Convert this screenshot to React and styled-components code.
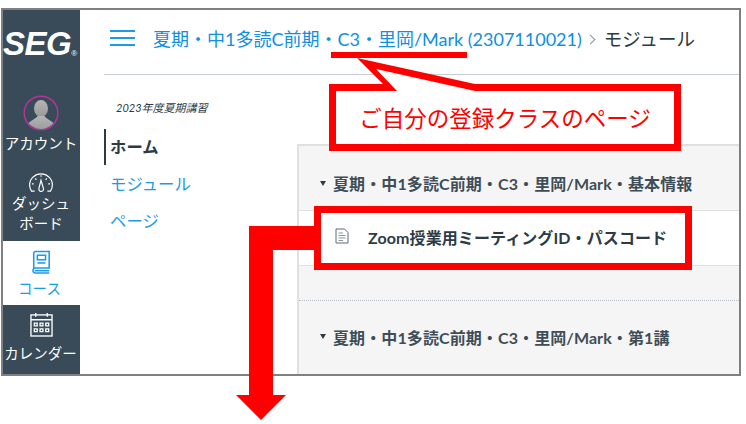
import styled, { createGlobalStyle } from "styled-components";

const GlobalStyle = createGlobalStyle`
    html, body {
        margin: 0;
        padding: 0;
        background: #fff;
        font-family: Lato, "Noto Sans CJK JP", sans-serif;
    }
`

const Page = styled.div`
    position: relative;
    width: 746px;
    height: 424px;
    overflow: hidden;
    padding: 8px 0 0 1px;
    box-sizing: border-box;
`

const Frame = styled.div`
    display: flex;
    width: 740px;
    height: 368px;
    box-sizing: border-box;
    border: 2px solid #808080;
    overflow: hidden;
    background: #fff;
`

const Sidebar = styled.nav`
    flex: 0 0 77px;
    display: flex;
    flex-direction: column;
    align-items: stretch;
    background: #394b58;
    color: #fff;
`

const Logo = styled.div`
    flex: none;
    height: 82px;
    padding-top: 18px;
    box-sizing: border-box;
    font: italic 700 33px/32px "Liberation Sans", sans-serif;
    letter-spacing: -0.5px;
    white-space: nowrap;

    sup {
        font-size: 8px;
        font-style: normal;
        font-weight: 400;
        letter-spacing: 0;
        vertical-align: -1px;
        line-height: 0;
    }
`

const NavItem = styled.a`
    flex: none;
    display: flex;
    flex-direction: column;
    align-items: center;
    height: ${(p) => p.$height}px;
    padding-top: ${(p) => p.$top}px;
    padding-right: 1px;
    box-sizing: border-box;
    font-size: 14.5px;
    line-height: 20px;
    text-align: center;
    white-space: nowrap;
    background: ${(p) => (p.$active ? "#fff" : "transparent")};
    color: ${(p) => (p.$active ? "#1e9be8" : "#fff")};
`

const NavLabel = styled.span`
    margin-top: ${(p) => p.$gap || 0}px;
    margin-right: ${(p) => p.$shift || 0}px;
`

const Main = styled.div`
    flex: 1;
    display: flex;
    flex-direction: column;
    min-width: 0;
`

const Header = styled.header`
    display: flex;
    align-items: center;
    height: 64px;
    margin-left: 24px;
    padding-left: 6px;
    border-bottom: 1px solid #c7cdd1;
    white-space: nowrap;
    flex: none;
`

const Burger = styled.div`
    width: 25px;
    height: 16px;
    margin-top: -8px;
    margin-right: 18px;
    border-top: 2px solid #1e9be8;
    border-bottom: 2px solid #1e9be8;
    box-sizing: border-box;
    position: relative;

    &::after {
        content: "";
        position: absolute;
        left: 0;
        right: 0;
        top: 5px;
        height: 2px;
        background: #1e9be8;
    }
`

const Crumbs = styled.div`
    display: flex;
    align-items: center;
    margin-top: -8px;
    font-size: 18px;
`

const CrumbLink = styled.a`
    color: #0e8fdf;
`

const CrumbCurrent = styled.span`
    color: #2d3b45;
    font-size: 18.5px;
`

const Chevron = styled.span`
    display: inline-block;
    width: 6px;
    height: 6px;
    margin: 2px 10px 0 5px;
    border-top: 1px solid #8a959c;
    border-right: 1px solid #8a959c;
    transform: rotate(45deg);
`

const Body = styled.div`
    flex: 1;
    display: flex;
    min-height: 0;
`

const CourseNav = styled.aside`
    flex: 0 0 217px;
    padding: 25px 0 0 24px;
    box-sizing: border-box;
`

const Term = styled.div`
    font-size: 11px;
    font-style: italic;
    line-height: 16px;
    color: #2d3b45;
    padding-left: 12px;
    margin-bottom: 13px;
`

const CourseLink = styled.a`
    display: block;
    height: 36px;
    line-height: 36px;
    padding-left: 4px;
    border-left: 2px solid ${(p) => (p.$active ? "#2d3b45" : "transparent")};
    font-size: 16.4px;
    font-weight: ${(p) => (p.$active ? 700 : 400)};
    color: ${(p) => (p.$active ? "#2d3b45" : "#1e9be8")};
    margin-bottom: 1px;
`

const Modules = styled.section`
    flex: 1;
    margin-top: 69px;
    background: #f5f5f5;
    border-top: 2px solid #dde1e4;
    border-left: 2px solid #dde1e4;
`

const ModuleHeader = styled.div`
    display: flex;
    align-items: center;
    height: ${(p) => p.$height}px;
    padding: ${(p) => p.$top || 0}px 0 0 21px;
    box-sizing: border-box;
    font-size: 16px;
    letter-spacing: 0.1px;
    font-weight: 700;
    color: #3f4d57;
    white-space: nowrap;
`

const Caret = styled.span`
    width: 0;
    height: 0;
    margin-right: 7px;
    border-left: 3.5px solid transparent;
    border-right: 3.5px solid transparent;
    border-top: 5px solid #2d3b45;
`

const ModuleItem = styled.div`
    display: flex;
    align-items: center;
    height: 56px;
    padding: 0 0 2px 36px;
    box-sizing: border-box;
    background: #fff;
    border-top: 1px solid #dde1e4;
    border-bottom: 1px solid #dde1e4;
    font-size: 16px;
    letter-spacing: 0.1px;
    font-weight: 700;
    color: #2d3b45;
    white-space: nowrap;

    svg {
        margin: -3px 19px 0 0;
    }
`

const ModuleGap = styled.div`
    height: 34px;
    border-bottom: 1px dotted #b8bec2;
`

const Overlay = styled.svg`
    position: absolute;
    left: 0;
    top: 0;
    pointer-events: none;
`

const CalloutText = styled.div`
    position: absolute;
    left: 336px;
    top: 102px;
    width: 338px;
    text-align: center;
    font-size: 22.5px;
    line-height: 34px;
    color: #f00;
    white-space: nowrap;
`

const DashIcon = () => (
    <svg width="26" height="20" viewBox="0 0 28 22" fill="none" stroke="#fff" strokeWidth="1.3">
        <path d="M7 20H3.500C2 18 1.500 16 1.500 13A12.500 12 0 0 1 26.500 13C26.500 16 26 18 24.500 20H21" />
        <path d="M14 8L16.500 16.500A2.600 2.600 0 1 1 11.700 17Z" />
        <path d="M4 12H6M22 12H24M7.500 6L9 7.500M20.500 6L19 7.500M14 2.500V4" />
    </svg>
);

const BookIcon = () => (
    <svg width="20" height="25" viewBox="0 0 22 26" fill="none" stroke="#1e9be8" strokeWidth="1.7">
        <path d="M3 20V3A2 2 0 0 1 5 1H20V19H4.500A2.800 2.800 0 0 0 4.500 24.500H20" />
        <path d="M4 22H20" />
        <rect x="7" y="5" width="9" height="5" />
        <path d="M7 13.500H16" />
    </svg>
);

const CalendarIcon = () => (
    <svg width="23" height="25" viewBox="0 0 24 26" fill="none" stroke="#fff" strokeWidth="1.4">
        <rect x="1" y="3" width="22" height="22" />
        <path d="M1 8H23M6 1V5M18 1V5" />
        <path d="M4.500 11.500h3v3h-3zM10.500 11.500h3v3h-3zM16.500 11.500h3v3h-3zM4.500 17.500h3v3h-3zM10.500 17.500h3v3h-3zM16.500 17.500h3v3h-3z" />
    </svg>
);

const PageIcon = () => (
    <svg width="14" height="16" viewBox="0 0 14 16" fill="none" stroke="#5c6a73" strokeWidth="1">
        <path d="M1 1H9.500L13 4.500V15H1Z" fill="#fff" />
        <path d="M3.500 5H8M3.500 7.500H10.500M3.500 10H10.500M3.500 12.500H8" stroke="#8a959c" />
    </svg>
);

const Avatar = () => (
    <svg width="36" height="36" viewBox="0 0 36 36">
        <defs>
            <clipPath id="avatarClip">
                <circle cx="18" cy="18" r="16" />
            </clipPath>
            <linearGradient id="avatarBody" x1="0" y1="0" x2="0" y2="1">
                <stop offset="0" stopColor="#b5b5b5" />
                <stop offset="1" stopColor="#999" />
            </linearGradient>
        </defs>
        <circle cx="18" cy="18" r="16.800" fill="#394b58" stroke="#b0349a" strokeWidth="1.500" />
        <g clipPath="url(#avatarClip)" fill="url(#avatarBody)">
            <ellipse cx="18" cy="13.500" rx="7" ry="8.500" />
            <path d="M3 33C4 26 12 25 14.500 21H21.500C24 25 32 26 33 33V36H3Z" />
        </g>
    </svg>
);

const Annotations = () => (
    <Overlay width="746" height="424" viewBox="0 0 746 424">
        <rect x="331" y="52" width="136" height="6" fill="#f00" />
        <rect x="332.500" y="87.500" width="345" height="60" fill="#fff" stroke="#f00" strokeWidth="7" />
        <polygon points="357,58 475,84 475,91 397,91 383,84" fill="#f00" />
        <polygon points="376,69 475,91 397,91" fill="#fff" />
        <rect x="317.500" y="209.500" width="371" height="57" fill="none" stroke="#f00" strokeWidth="7" />
        <path d="M314 226H249V395H236L261 420L286 395H273V250H314Z" fill="#f00" />
    </Overlay>
);

const App = () => {
    return (
        <Page>
            <GlobalStyle />
            <Frame>
                <Sidebar>
                    <Logo>SEG<sup>®</sup></Logo>
                    <NavItem $height={69} $top={3}>
                        <Avatar />
                        <NavLabel $gap={3}>アカウント</NavLabel>
                    </NavItem>
                    <NavItem $height={80} $top={12}>
                        <DashIcon />
                        <NavLabel $gap={1}>ダッシュ</NavLabel>
                        <NavLabel>ボード</NavLabel>
                    </NavItem>
                    <NavItem $height={64} $top={9} $active>
                        <BookIcon />
                        <NavLabel $gap={4} $shift={3}>コース</NavLabel>
                    </NavItem>
                    <NavItem $height={70} $top={7}>
                        <CalendarIcon />
                        <NavLabel $gap={7} $shift={1}>カレンダー</NavLabel>
                    </NavItem>
                </Sidebar>
                <Main>
                    <Header>
                        <Burger />
                        <Crumbs>
                            <CrumbLink>夏期・中1多読C前期・C3・里岡/Mark (2307110021)</CrumbLink>
                            <Chevron />
                            <CrumbCurrent>モジュール</CrumbCurrent>
                        </Crumbs>
                    </Header>
                    <Body>
                        <CourseNav>
                            <Term>2023年度夏期講習</Term>
                            <CourseLink $active>ホーム</CourseLink>
                            <CourseLink>モジュール</CourseLink>
                            <CourseLink>ページ</CourseLink>
                        </CourseNav>
                        <Modules>
                            <ModuleHeader $height={64} $top={10}>
                                <Caret />
                                夏期・中1多読C前期・C3・里岡/Mark・基本情報
                            </ModuleHeader>
                            <ModuleItem>
                                <PageIcon />
                                Zoom授業用ミーティングID・パスコード
                            </ModuleItem>
                            <ModuleGap />
                            <ModuleHeader $height={71}>
                                <Caret />
                                夏期・中1多読C前期・C3・里岡/Mark・第1講
                            </ModuleHeader>
                        </Modules>
                    </Body>
                </Main>
            </Frame>
            <Annotations />
            <CalloutText>ご自分の登録クラスのページ</CalloutText>
        </Page>
    );
};

export default App;
